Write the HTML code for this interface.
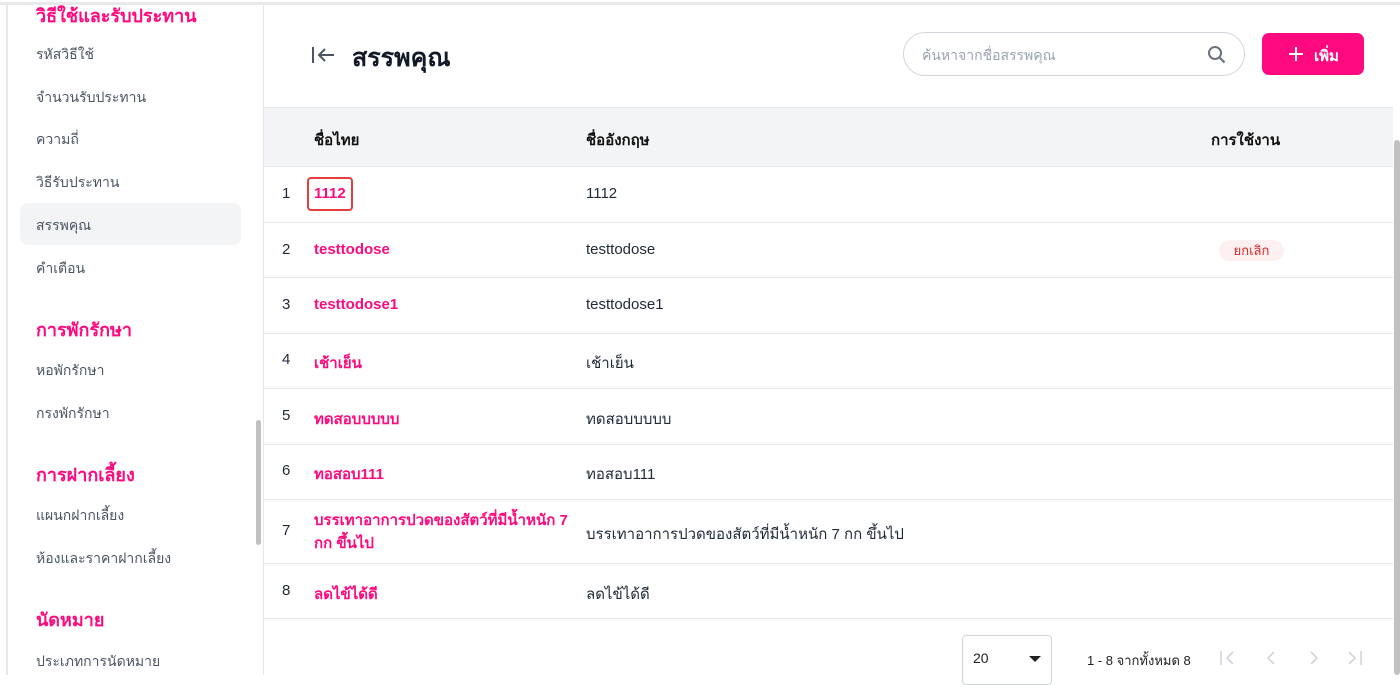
<!DOCTYPE html>
<html><head><meta charset="utf-8"><style>
*{margin:0;padding:0;box-sizing:border-box}
body{width:1400px;height:675px;overflow:hidden;background:#fff;font-family:"Liberation Sans","Noto Sans CJK SC",sans-serif;position:relative;color:#1f2937}
.a{position:absolute;white-space:nowrap}
.sh{color:#ff0a7e;font-weight:bold;font-size:18px}
.si{color:#4b5563;font-size:14px}
.row{position:absolute;left:264px;width:1129px;border-bottom:1px solid #e5e7eb}
.n{position:absolute;left:18px;font-size:15px;color:#1f2937}
.t{position:absolute;left:50px;font-size:15px;color:#ff0a7e;font-weight:bold}
.e{position:absolute;left:322px;font-size:15px;color:#1f2937}
</style></head><body>
<div class="a" style="left:0;top:2px;width:1400px;height:3px;background:#e8e9eb"></div>
<div class="a" style="left:6px;top:5px;width:2px;height:670px;background:#e5e7eb"></div>
<div class="a" style="left:263px;top:5px;width:1px;height:670px;background:#e5e7eb"></div>
<div class="a" style="left:256px;top:420px;width:5px;height:125px;background:#c1c1c1;border-radius:3px"></div>
<div class="a" style="left:20px;top:203px;width:221px;height:42px;background:#f3f4f6;border-radius:8px"></div>
<div class="a sh" style="left:36px;top:1px">วิธีใช้และรับประทาน</div>
<div class="a si" style="left:36px;top:44px">รหัสวิธีใช้</div>
<div class="a si" style="left:36px;top:87px">จำนวนรับประทาน</div>
<div class="a si" style="left:36px;top:129px">ความถี่</div>
<div class="a si" style="left:36px;top:172px">วิธีรับประทาน</div>
<div class="a si" style="left:36px;top:215px">สรรพคุณ</div>
<div class="a si" style="left:36px;top:258px">คำเตือน</div>
<div class="a sh" style="left:36px;top:315px">การพักรักษา</div>
<div class="a si" style="left:36px;top:360px">หอพักรักษา</div>
<div class="a si" style="left:36px;top:403px">กรงพักรักษา</div>
<div class="a sh" style="left:36px;top:460px">การฝากเลี้ยง</div>
<div class="a si" style="left:36px;top:505px">แผนกฝากเลี้ยง</div>
<div class="a si" style="left:36px;top:548px">ห้องและราคาฝากเลี้ยง</div>
<div class="a sh" style="left:36px;top:605px">นัดหมาย</div>
<div class="a si" style="left:36px;top:651px">ประเภทการนัดหมาย</div>

<svg class="a" style="left:310px;top:44px" width="26" height="22" viewBox="0 0 26 22"><path d="M3 3v16M24 11H9M15 5l-6 6 6 6" stroke="#4b5563" stroke-width="2" fill="none"/></svg>
<div class="a" style="left:352px;top:38px;font-size:25px;font-weight:bold;color:#111827">สรรพคุณ</div>
<div class="a" style="left:903px;top:32px;width:342px;height:44px;border:1px solid #d1d5db;border-radius:22px"></div>
<div class="a" style="left:922px;top:45px;font-size:14px;color:#9ca3af">ค้นหาจากชื่อสรรพคุณ</div>
<svg class="a" style="left:1206px;top:44px" width="22" height="22" viewBox="0 0 22 22"><circle cx="9" cy="9" r="6" stroke="#6b7280" stroke-width="2" fill="none"/><path d="M13.5 13.5l5 5" stroke="#6b7280" stroke-width="2.2"/></svg>
<div class="a" style="left:1262px;top:33px;width:102px;height:42px;background:#ff0a7e;border-radius:7px"></div>
<svg class="a" style="left:1287px;top:45px" width="18" height="18"><path d="M9 2v14M2 9h14" stroke="#fff" stroke-width="2"/></svg>
<div class="a" style="left:1314px;top:44px;font-size:15px;font-weight:bold;color:#fff">เพิ่ม</div>

<div class="a" style="left:264px;top:107px;width:1129px;height:60px;background:#f3f4f6;border-top:1px solid #e5e7eb;border-bottom:1px solid #e5e7eb"></div>
<div class="a" style="left:314px;top:128px;font-size:15px;font-weight:bold;color:#111">ชื่อไทย</div>
<div class="a" style="left:586px;top:128px;font-size:15px;font-weight:bold;color:#111">ชื่ออังกฤษ</div>
<div class="a" style="left:1211px;top:128px;font-size:15px;font-weight:bold;color:#111">การใช้งาน</div>
<div class="a" style="left:1394px;top:140px;width:6px;height:535px;background:#c1c1c1;border-radius:3px"></div>

<div class="row" style="top:167px;height:56px"><span class="n" style="top:18px">1</span><span class="a" style="left:43px;top:10px;width:46px;height:34px;border:2px solid #e53e3e;border-radius:4px"></span><span class="t" style="top:18px">1112</span><span class="e" style="top:18px">1112</span></div>
<div class="row" style="top:223px;height:55px"><span class="n" style="top:18px">2</span><span class="t" style="top:18px">testtodose</span><span class="e" style="top:18px">testtodose</span><span class="a" style="left:955px;top:17px;width:65px;height:21px;background:#fdf0f0;border-radius:11px;color:#dc2626;font-size:13px;text-align:center;line-height:21px">ยกเลิก</span></div>
<div class="row" style="top:278px;height:56px"><span class="n" style="top:18px">3</span><span class="t" style="top:18px">testtodose1</span><span class="e" style="top:18px">testtodose1</span></div>
<div class="row" style="top:334px;height:55px"><span class="n" style="top:17px">4</span><span class="t" style="top:17px">เช้าเย็น</span><span class="e" style="top:17px">เช้าเย็น</span></div>
<div class="row" style="top:389px;height:56px"><span class="n" style="top:18px">5</span><span class="t" style="top:18px">ทดสอบบบบบ</span><span class="e" style="top:18px">ทดสอบบบบบ</span></div>
<div class="row" style="top:445px;height:55px"><span class="n" style="top:17px">6</span><span class="t" style="top:17px">ทอสอบ111</span><span class="e" style="top:17px">ทอสอบ111</span></div>
<div class="row" style="top:500px;height:64px"><span class="n" style="top:22px">7</span><span class="t" style="top:9px;line-height:23px;white-space:normal;width:270px">บรรเทาอาการปวดของสัตว์ที่มีน้ำหนัก 7 กก ขึ้นไป</span><span class="e" style="top:22px">บรรเทาอาการปวดของสัตว์ที่มีน้ำหนัก 7 กก ขึ้นไป</span></div>
<div class="row" style="top:564px;height:55px"><span class="n" style="top:18px">8</span><span class="t" style="top:18px">ลดไข้ได้ดี</span><span class="e" style="top:18px">ลดไข้ได้ดี</span></div>

<div class="a" style="left:962px;top:635px;width:90px;height:50px;border:1px solid #d1d5db;border-radius:4px"></div>
<div class="a" style="left:973px;top:650px;font-size:14px;color:#222">20</div>
<svg class="a" style="left:1029px;top:655px" width="12" height="8"><path d="M0 1h12L6 7z" fill="#222"/></svg>
<div class="a" style="left:1087px;top:650px;font-size:13px;color:#222">1 - 8 จากทั้งหมด 8</div>
<svg class="a" style="left:1218px;top:649px" width="150" height="18" viewBox="0 0 150 18" fill="none" stroke="#d1d5db" stroke-width="1.6"><path d="M3 2v14M15 3l-6 6 6 6"/><path d="M56 3l-6 6 6 6"/><path d="M93 3l6 6-6 6"/><path d="M131 3l6 6-6 6M143 2v14"/></svg>
</body></html>
